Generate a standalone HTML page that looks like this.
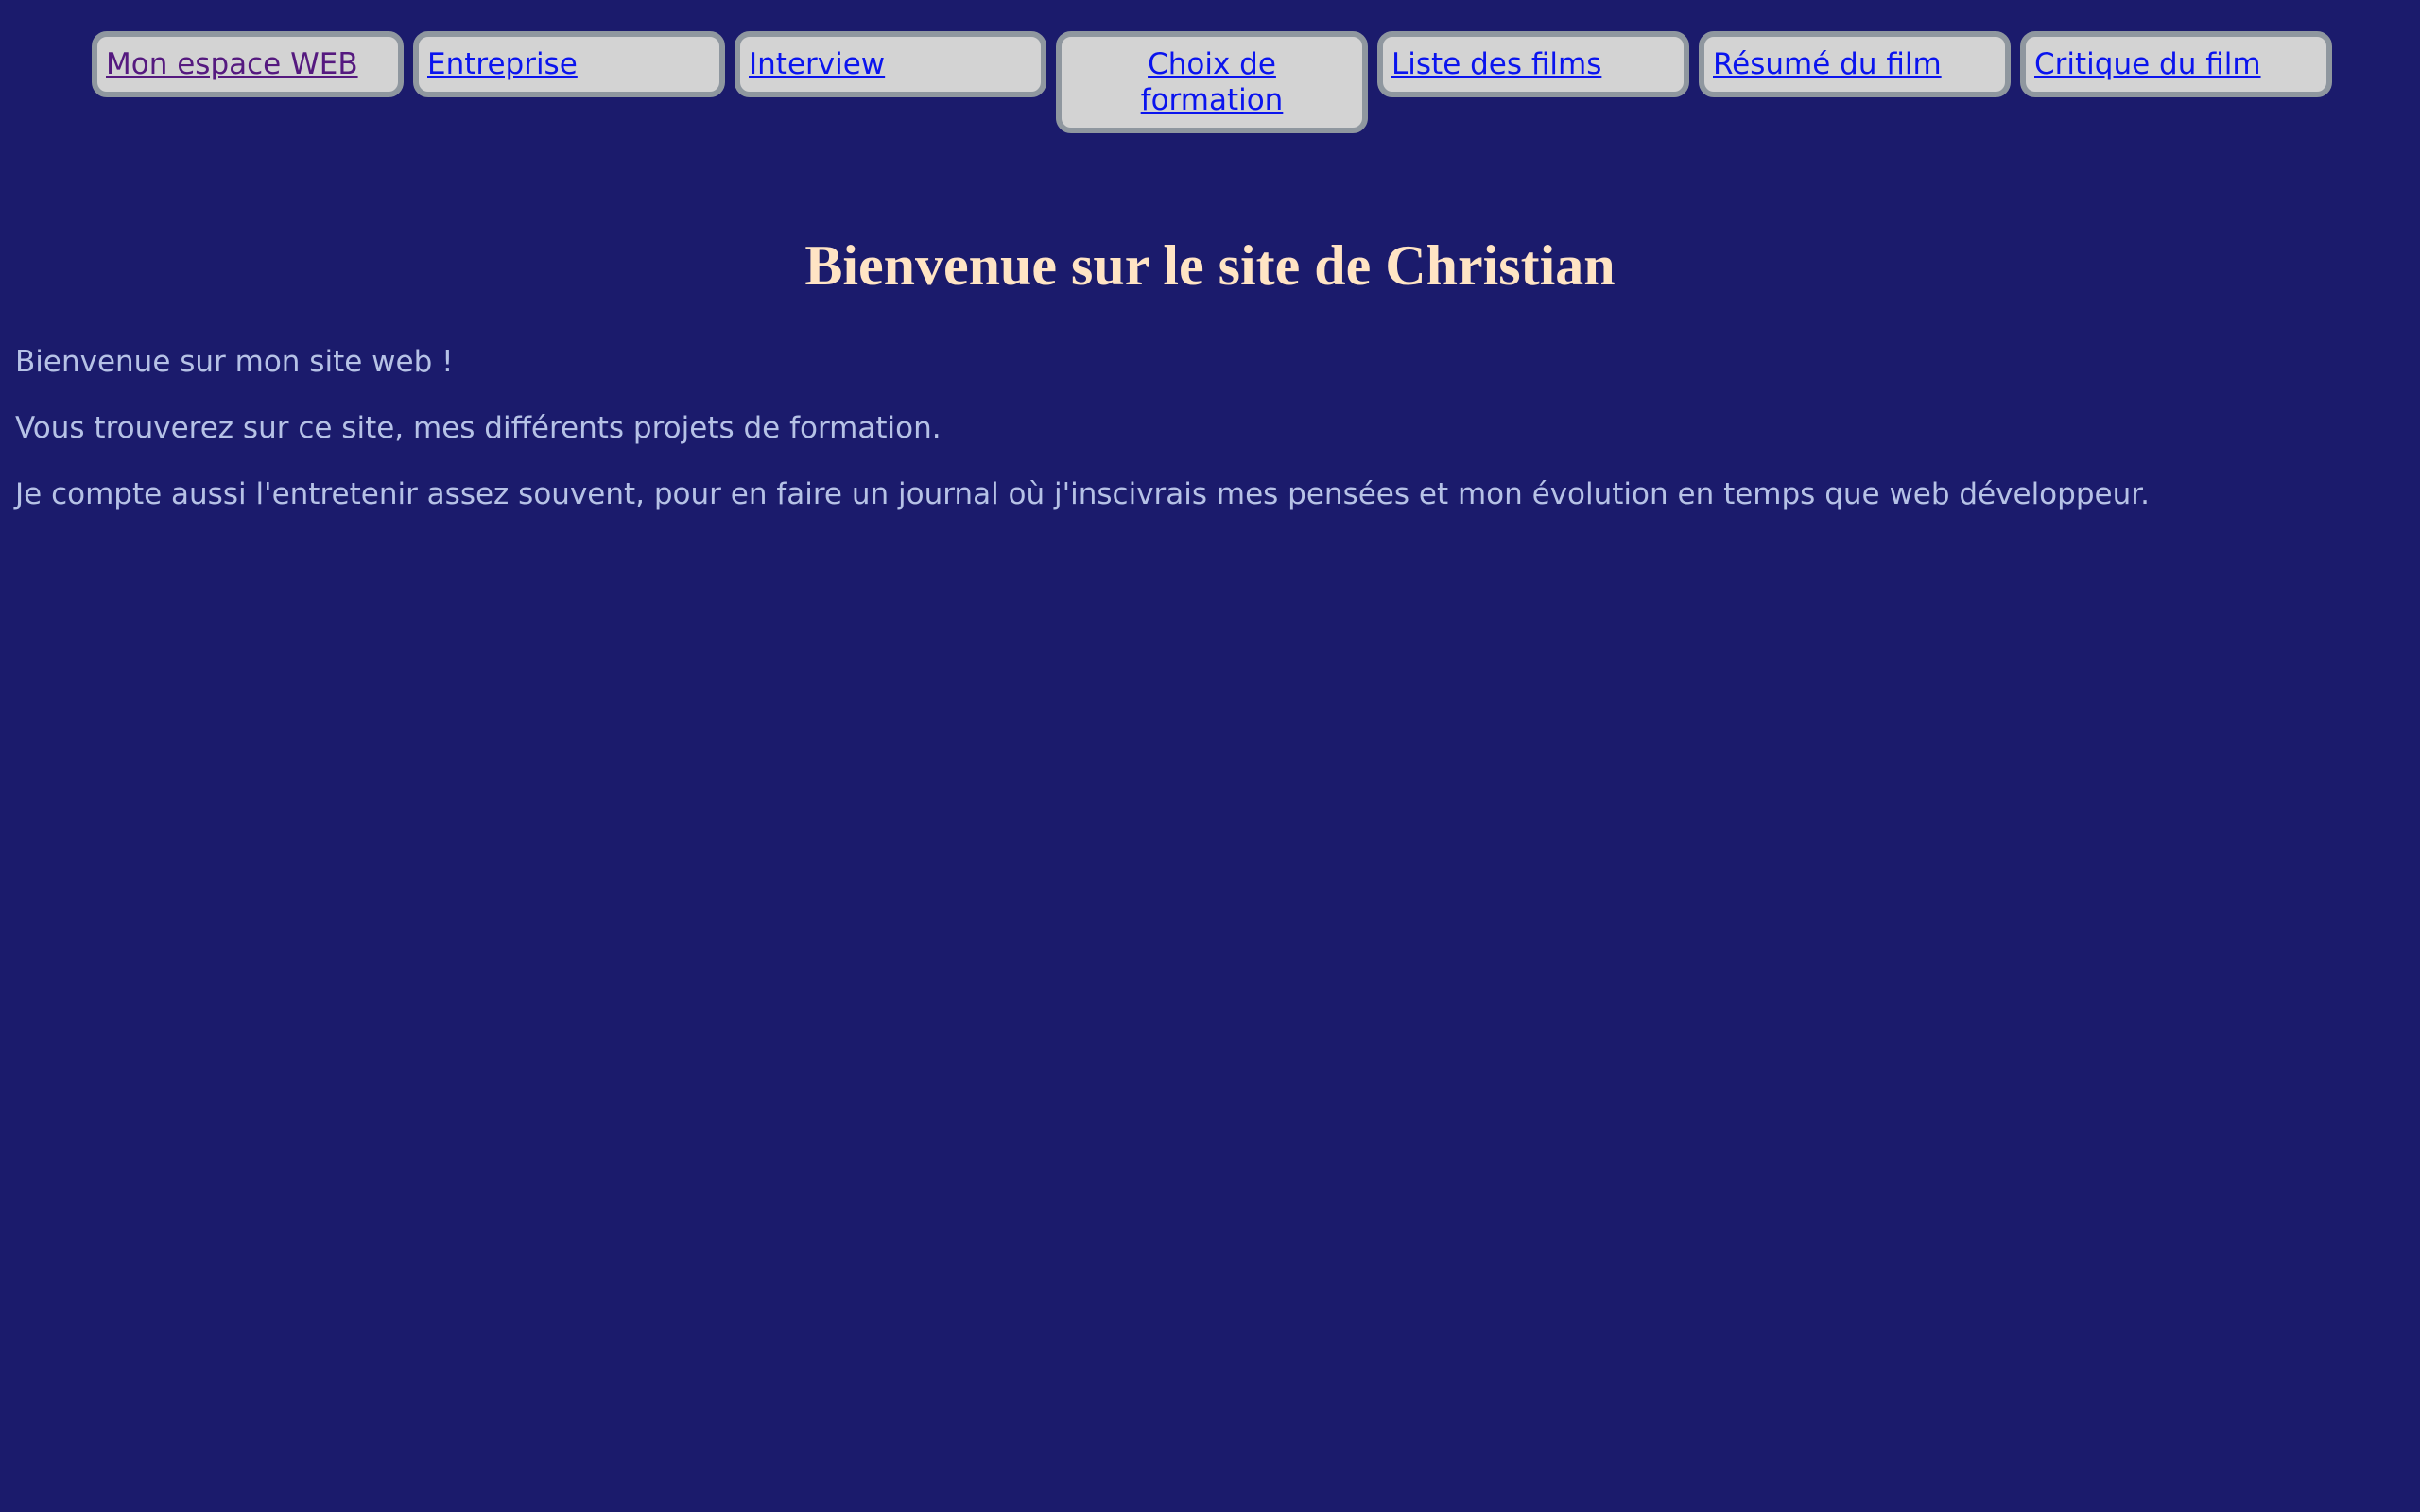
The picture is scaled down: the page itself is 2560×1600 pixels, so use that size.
<!DOCTYPE html>
<html><head><meta charset="utf-8"><style>
html,body{margin:0;padding:0;background:#1b1b6c;width:2560px;height:1600px;overflow:hidden}
body{font-family:"DejaVu Sans","Liberation Sans",sans-serif;font-size:31px;color:#b6c2e6}
.nav{position:absolute;top:33px;left:97px;display:flex;align-items:flex-start;gap:10px}
.nav div{box-sizing:border-box;width:330px;background:#d3d3d3;border:6px solid #8f979f;border-radius:16px;padding:10px 9px 10px 9px;line-height:38px}
.nav div.c{text-align:center}
a{color:#0a14ee}
a.v{color:#55197f}
h1{position:absolute;top:243px;left:0;width:2560px;margin:0;text-align:center;font-family:"Liberation Serif",serif;font-weight:bold;font-size:60px;color:#ffe4c4;line-height:76px}
p{position:absolute;left:16px;margin:0;line-height:38px;white-space:nowrap}
</style></head><body>
<div class="nav">
<div><a class="v" href="#">Mon espace WEB</a></div>
<div><a href="#">Entreprise</a></div>
<div><a href="#">Interview</a></div>
<div class="c"><a href="#">Choix de<br>formation</a></div>
<div><a href="#">Liste des films</a></div>
<div><a href="#">Résumé du film</a></div>
<div><a href="#">Critique du film</a></div>
</div>
<h1>Bienvenue sur le site de Christian</h1>
<p style="top:364px">Bienvenue sur mon site web !</p>
<p style="top:434px">Vous trouverez sur ce site, mes différents projets de formation.</p>
<p style="top:504px">Je compte aussi l'entretenir assez souvent, pour en faire un journal où j'inscivrais mes pensées et mon évolution en temps que web développeur.</p>
</body></html>
